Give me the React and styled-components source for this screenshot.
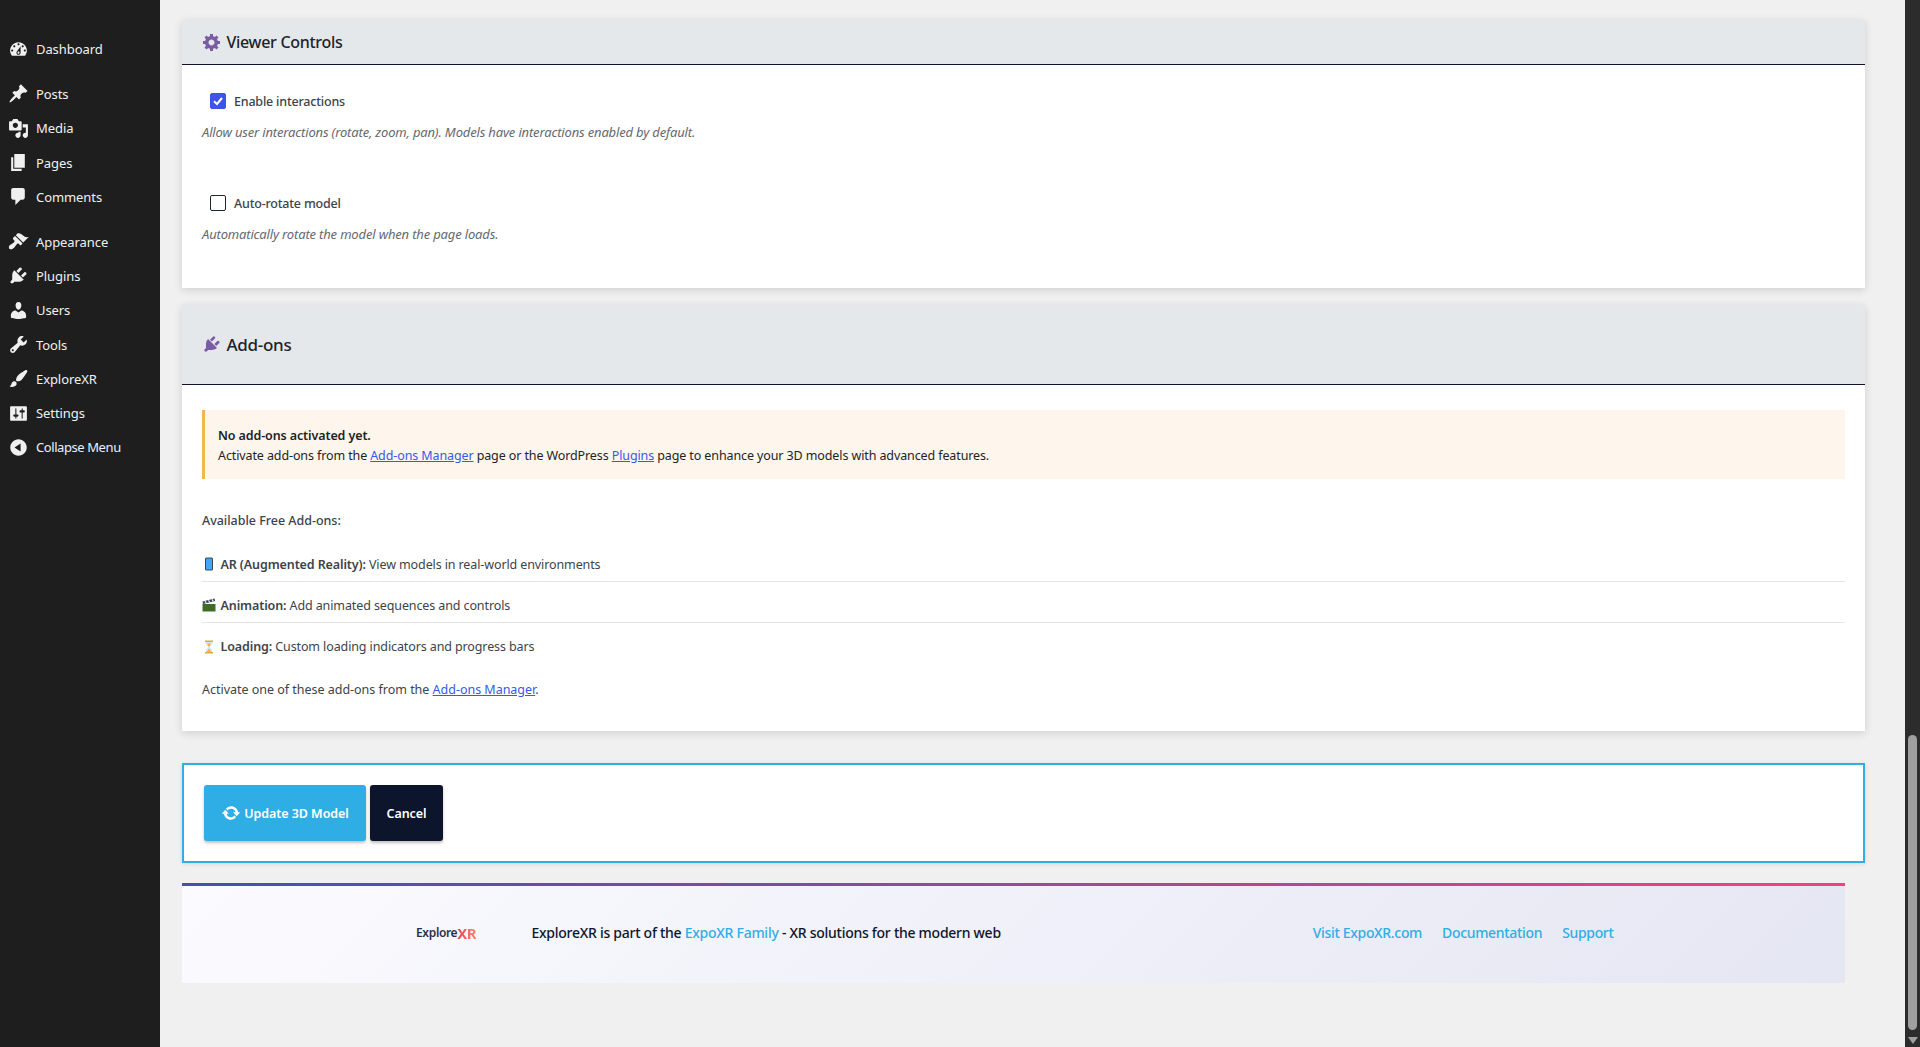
import React from "react";
import styled, { createGlobalStyle } from "styled-components";

const GlobalStyle = createGlobalStyle`
  html, body {
    margin: 0;
    padding: 0;
    height: 100%;
    overflow: hidden;
    background: #f0f0f1;
  }
  body {
    font-family: "Noto Sans", "Open Sans", sans-serif;
    font-size: 12.5px;
    color: #3c434a;
  }
`;

const Page = styled.div`
  display: flex;
  width: 1920px;
  height: 1047px;
  overflow: hidden;
`;

const Sidebar = styled.nav`
  flex: 0 0 160px;
  box-sizing: border-box;
  padding-top: 32px;
  background: #1e1e1e;
`;

const MenuGroup = styled.div`
  margin-bottom: 10.5px;
`;

const MenuItem = styled.a`
  display: flex;
  align-items: center;
  height: 34.3px;
  padding-left: 7.5px;
  gap: 7.5px;
  color: ${(p) => (p.$accent ? "#e6f2ff" : "#f0f0f1")};
  font-size: 13px;
  letter-spacing: ${(p) => (p.$accent ? "-0.42px" : "-0.08px")};
  svg {
    flex: 0 0 21px;
    width: 21px;
    height: 21px;
    fill: #f0f0f1;
  }
`;

const Content = styled.main`
  flex: 1;
  min-width: 0;
  box-sizing: border-box;
  padding: 0 40px 0 22px;
`;

const PreviousCard = styled.div`
  height: 0;
  margin-bottom: 20px;
  box-shadow: 0 1px 2px rgba(0, 0, 0, 0.3);
`;

const Card = styled.section`
  margin-bottom: ${(p) => p.$gap}px;
  background: #fff;
  box-shadow: 0 2px 8px rgba(0, 0, 0, 0.14);
`;

const CardHeader = styled.header`
  display: flex;
  align-items: center;
  box-sizing: border-box;
  height: ${(p) => p.$height}px;
  padding: 0 0 1px 20px;
  gap: 4.5px;
  background: #e4e8eb;
  border-bottom: 1px solid #0d152d;
  color: #1d2327;
  font-size: ${(p) => p.$size}px;
  font-weight: 500;
  letter-spacing: -0.3px;
  svg {
    width: 20px;
    height: 20px;
    fill: #7b5aa6;
  }
`;

const CardBody = styled.div`
  padding: ${(p) => p.$padding};
`;

const CheckRow = styled.label`
  display: flex;
  align-items: center;
  height: 16px;
  margin-left: 8px;
  gap: 8px;
  color: #3c434a;
  font-size: 12.5px;
  font-weight: 500;
  letter-spacing: -0.2px;
`;

const CheckBox = styled.span`
  display: flex;
  align-items: center;
  justify-content: center;
  box-sizing: border-box;
  width: 16px;
  height: 16px;
  border-radius: 2px;
  border: 1px solid ${(p) => (p.$on ? "#3c54e8" : "#1f2533")};
  background: ${(p) => (p.$on ? "#3c54e8" : "#fff")};
  svg {
    width: 12px;
    height: 12px;
  }
`;

const Help = styled.p`
  margin: 15px 0 ${(p) => p.$after}px;
  line-height: 17px;
  color: #646970;
  font-size: 13px;
  font-style: italic;
  letter-spacing: -0.16px;
`;

const Notice = styled.div`
  box-sizing: border-box;
  height: 69px;
  padding: 16px 13px 0;
  background: #fef6ec;
  border-left: 3px solid #f0b849;
  color: #1d2327;
  font-size: 12.5px;
  line-height: 20px;
  letter-spacing: -0.11px;
  strong {
    display: block;
    font-weight: 600;
  }
`;

const TextLink = styled.a`
  color: #3858e9;
  text-decoration: underline;
`;

const Para = styled.p`
  margin: ${(p) => p.$margin};
  line-height: 18px;
  font-size: 12.5px;
  font-weight: ${(p) => (p.$medium ? 500 : 400)};
  letter-spacing: -0.02px;
`;

const AddonList = styled.ul`
  margin: 0;
  padding: 0;
  list-style: none;
`;

const AddonItem = styled.li`
  display: flex;
  align-items: center;
  box-sizing: border-box;
  height: 41px;
  padding-top: 6px;
  gap: 4.5px;
  font-size: 12.5px;
  letter-spacing: -0.11px;
  border-bottom: ${(p) => (p.$last ? "0" : "1px solid #e2e4e7")};
  strong {
    font-weight: 600;
  }
  svg {
    flex: 0 0 14px;
    width: 14px;
    height: 14px;
  }
`;

const ActionBar = styled.div`
  display: flex;
  gap: 4px;
  box-sizing: border-box;
  height: 100px;
  margin: 32px 0 20px;
  padding: 20px;
  background: #fff;
  border: 2px solid #2eaee4;
  box-shadow: 0 1px 4px rgba(0, 0, 0, 0.12);
`;

const Button = styled.button`
  display: flex;
  align-items: center;
  justify-content: center;
  gap: 3px;
  box-sizing: border-box;
  width: ${(p) => p.$width}px;
  height: 56px;
  padding: 0;
  border: 0;
  border-radius: 3px;
  background: ${(p) => p.$bg};
  box-shadow: 0 2px 3px rgba(0, 0, 0, 0.25);
  color: #fff;
  font-family: inherit;
  font-size: 12.5px;
  font-weight: 600;
  letter-spacing: -0.06px;
  svg {
    width: 20px;
    height: 20px;
    fill: #fff;
  }
`;

const Footer = styled.footer`
  display: flex;
  align-items: center;
  box-sizing: border-box;
  height: 100px;
  margin-right: 20px;
  padding: 0 0 4px 234px;
  border-top: 3px solid transparent;
  border-image: linear-gradient(90deg, #3f51b5, #f0437f) 1;
  background: linear-gradient(135deg, #fbfbff, #e4e6f2);
  color: #0d152d;
  font-size: 14px;
  font-weight: 500;
  letter-spacing: -0.27px;
`;

const Logo = styled.span`
  display: flex;
  align-items: center;
  width: 62px;
  margin-right: 53.5px;
  white-space: nowrap;
  color: #2b3045;
  font-size: 12px;
  font-weight: 600;
  letter-spacing: -0.35px;
`;

const LogoMark = styled.b`
  font-size: 15px;
  font-weight: 700;
  letter-spacing: -0.5px;
  background: linear-gradient(90deg, #e8434f, #f8836b);
  -webkit-background-clip: text;
  background-clip: text;
  color: transparent;
`;

const FooterLink = styled.a`
  color: #2eaee4;
`;

const FooterNav = styled.div`
  display: flex;
  gap: 20px;
  margin-left: 312px;
  letter-spacing: -0.33px;
`;

const Scrollbar = styled.aside`
  display: flex;
  flex-direction: column;
  align-items: center;
  flex: 0 0 15px;
  box-sizing: border-box;
  padding-top: 735px;
  background: #2c2c2c;
`;

const ScrollThumb = styled.div`
  width: 9px;
  height: 295px;
  margin-bottom: 7px;
  border-radius: 5px;
  background: #9f9f9f;
`;

const ScrollArrow = styled.div`
  width: 0;
  height: 0;
  border-left: 5px solid transparent;
  border-right: 5px solid transparent;
  border-top: 7px solid #9f9f9f;
`;

const Icon = ({ d }) => (
  <svg viewBox="0 0 20 20">
    <path d={d} />
  </svg>
);

const icons = {
  dashboard:
    "M3.76 16h12.48c1.1-1.37 1.76-3.11 1.76-5 0-4.42-3.58-8-8-8s-8 3.58-8 8c0 1.89.66 3.63 1.76 5zM10 4c.55 0 1 .45 1 1s-.45 1-1 1-1-.45-1-1 .45-1 1-1zM6 6c.55 0 1 .45 1 1s-.45 1-1 1-1-.45-1-1 .45-1 1-1zm8 0c.55 0 1 .45 1 1s-.45 1-1 1-1-.45-1-1 .45-1 1-1zm-5.37 5.55L12 7v6c0 1.1-.9 2-2 2s-2-.9-2-2c0-.57.24-1.08.63-1.45zM4 10c.55 0 1 .45 1 1s-.45 1-1 1-1-.45-1-1 .45-1 1-1zm12 0c.55 0 1 .45 1 1s-.45 1-1 1-1-.45-1-1 .45-1 1-1zm-5 3c0-.55-.45-1-1-1s-1 .45-1 1 .45 1 1 1 1-.45 1-1z",
  posts:
    "M10.44 3.02l1.82-1.82 6.36 6.35-1.83 1.82c-1.05-.68-2.48-.57-3.41.36l-.75.75c-.92.93-1.04 2.35-.35 3.41l-1.83 1.82-2.41-2.41-2.8 2.79c-.42.42-3.38 2.71-3.8 2.29s1.86-3.39 2.28-3.81l2.79-2.79L4.1 9.36l1.83-1.82c1.05.69 2.48.57 3.4-.36l.75-.75c.93-.92 1.05-2.35.36-3.41z",
  media:
    "M13 11V4c0-.55-.45-1-1-1h-1.67L9 1H5L3.67 3H2c-.55 0-1 .45-1 1v7c0 .55.45 1 1 1h10c.55 0 1-.45 1-1zM7 4.5c1.38 0 2.5 1.12 2.5 2.5S8.38 9.5 7 9.5 4.5 8.38 4.5 7 5.62 4.5 7 4.5zM14 6h5v10.5c0 1.38-1.12 2.5-2.5 2.5S14 17.88 14 16.5s1.12-2.5 2.5-2.5c.17 0 .34.02.5.05V9h-3V6zm-4 8.05V13h2v3.5c0 1.38-1.12 2.5-2.5 2.5S7 17.88 7 16.5 8.12 14 9.5 14c.17 0 .34.02.5.05z",
  pages: "M6 15V2h10v13H6zm-1 1h8v2H3V5h2v11z",
  comments:
    "M5 2h9c1.1 0 2 .9 2 2v7c0 1.1-.9 2-2 2h-2l-5 5v-5H5c-1.1 0-2-.9-2-2V4c0-1.1.9-2 2-2z",
  appearance:
    "M14.48 11.06L7.41 3.99l1.5-1.5c.5-.56 2.3-.47 3.51.32 1.21.8 1.43 1.28 2.91 2.1 1.18.64 2.45 1.26 4.45.85zm-.71.71L6.7 4.7 4.93 6.47c-.39.39-.39 1.02 0 1.41l1.06 1.06c.39.39.39 1.03 0 1.42-.6.6-1.43 1.11-2.21 1.69-.35.26-.7.53-1.01.84C1.43 13.23.4 14.89.99 16.5c.11.29.38.56.67.67 1.61.59 3.27-.44 4.61-1.78.31-.31.58-.66.84-1.01.58-.78 1.09-1.61 1.69-2.21.39-.39 1.03-.39 1.42 0l1.06 1.06c.39.39 1.02.39 1.41 0z",
  plugins:
    "M13.11 4.36L9.87 7.6 8 5.73l3.24-3.24c.35-.34 1.05-.2 1.56.32.52.51.66 1.21.31 1.55zm-8 1.77l.91-1.12 9.01 9.01-1.19.84c-.71.71-2.63 1.16-3.82 1.16H6.14L4.9 17.26c-.59.59-1.54.59-2.12 0-.59-.58-.59-1.53 0-2.12l1.24-1.24v-3.88c0-1.13.4-3.19 1.09-3.89zm7.26 3.97l3.24-3.24c.34-.35 1.04-.21 1.55.31.52.51.66 1.21.31 1.55l-3.24 3.25z",
  users:
    "M10 9.25c-2.27 0-2.73-3.44-2.73-3.44C7 4.02 7.82 2 9.97 2c2.16 0 2.98 2.02 2.71 3.81 0 0-.41 3.44-2.68 3.44zm0 2.57L12.72 10c2.39 0 4.52 2.33 4.52 4.53v2.49s-3.65 1.13-7.24 1.13c-3.65 0-7.24-1.13-7.24-1.13v-2.49c0-2.25 1.94-4.48 4.47-4.48z",
  tools:
    "M16.68 9.77c-1.34 1.34-3.3 1.67-4.95.99l-5.41 6.52c-.99.99-2.59.99-3.58 0s-.99-2.59 0-3.57l6.52-5.42c-.68-1.65-.35-3.61.99-4.95 1.28-1.28 3.12-1.62 4.72-1.06l-2.89 2.89 2.82 2.82 2.86-2.87c.53 1.58.18 3.39-1.08 4.65zM3.81 16.21c.4.39 1.04.39 1.43 0 .4-.4.4-1.04 0-1.43-.39-.4-1.03-.4-1.43 0-.39.39-.39 1.03 0 1.43z",
  brush:
    "M18.33 3.57s.27-.8-.31-1.36c-.53-.52-1.22-.24-1.22-.24-.61.3-5.76 3.47-7.67 5.57-.86.96-2.06 3.79-1.09 4.82.92.98 3.96-.17 4.79-1 2.06-2.06 5.21-7.17 5.5-7.79zM1.4 17.65c2.37-1.56 1.46-3.41 3.23-4.64.93-.65 2.22-.62 3.08.29.63.67.8 2.57-.16 3.46-1.57 1.45-4 1.55-6.15.89z",
  settings:
    "M18 16V4c0-.55-.45-1-1-1H3c-.55 0-1 .45-1 1v12c0 .55.45 1 1 1h14c.55 0 1-.45 1-1zM8 11h1c.55 0 1 .45 1 1s-.45 1-1 1H8v1.5c0 .28-.22.5-.5.5s-.5-.22-.5-.5V13H6c-.55 0-1-.45-1-1s.45-1 1-1h1V5.5c0-.28.22-.5.5-.5s.5.22.5.5V11zm5-2h-1c-.55 0-1-.45-1-1s.45-1 1-1h1V5.5c0-.28.22-.5.5-.5s.5.22.5.5V7h1c.55 0 1 .45 1 1s-.45 1-1 1h-1v5.5c0 .28-.22.5-.5.5s-.5-.22-.5-.5V9z",
  collapse:
    "M10 2.16c4.33 0 7.84 3.51 7.84 7.84s-3.51 7.84-7.84 7.84S2.16 14.33 2.16 10 5.71 2.16 10 2.16zm2 11.72V6.12L6.18 9.97z",
  gear:
    "M18 12h-2.18c-.17.7-.44 1.35-.81 1.93l1.54 1.54-2.1 2.1-1.54-1.54c-.58.36-1.23.63-1.91.79V19H8v-2.18c-.68-.16-1.33-.43-1.91-.79l-1.54 1.54-2.12-2.12 1.54-1.54c-.36-.58-.63-1.23-.79-1.91H1V9.03h2.17c.16-.7.44-1.35.8-1.94L2.43 5.55l2.1-2.1 1.54 1.54c.58-.37 1.24-.64 1.93-.81V2h3v2.18c.68.16 1.33.43 1.91.79l1.54-1.54 2.12 2.12-1.54 1.54c.36.59.64 1.24.8 1.94H18V12zm-8.5 1.5c1.66 0 3-1.34 3-3s-1.34-3-3-3-3 1.34-3 3 1.34 3 3 3z",
  update:
    "M10.2 3.28c3.53 0 6.43 2.61 6.91 6h2.08l-3.5 4-3.5-4h2.32c-.45-1.97-2.21-3.44-4.31-3.44-1.45 0-2.73.71-3.54 1.78L4.95 5.66C6.23 4.2 8.11 3.28 10.2 3.28zm-.4 13.44c-3.52 0-6.43-2.61-6.9-6H.81l3.5-4c1.17 1.33 2.33 2.67 3.5 4H5.49c.45 1.97 2.21 3.44 4.31 3.44 1.45 0 2.73-.71 3.54-1.78l1.71 1.95c-1.28 1.46-3.15 2.39-5.25 2.39z",
};

const menuGroups = [
  [["Dashboard", icons.dashboard]],
  [
    ["Posts", icons.posts],
    ["Media", icons.media],
    ["Pages", icons.pages],
    ["Comments", icons.comments],
  ],
  [
    ["Appearance", icons.appearance],
    ["Plugins", icons.plugins],
    ["Users", icons.users],
    ["Tools", icons.tools],
    ["ExploreXR", icons.brush],
    ["Settings", icons.settings],
    ["Collapse Menu", icons.collapse, true],
  ],
];

const PhoneIcon = () => (
  <svg viewBox="0 0 14 14">
    <rect x="3" y="0.5" width="8" height="13" rx="1.5" fill="#37474f" />
    <rect x="4" y="1.5" width="6" height="11" rx="0.5" fill="#42a5f5" />
  </svg>
);

const ClapperIcon = () => (
  <svg viewBox="0 0 14 14">
    <rect x="0.5" y="6" width="13" height="7.5" fill="#3f6b26" />
    <path d="M0.5 3.5 12.5 0.5l.6 2.6L1 6z" fill="#37474f" />
    <path d="M3 3l1.2 2M6.5 2.2l1.2 2M10 1.4l1.2 2" stroke="#eceff1" strokeWidth="1.2" />
  </svg>
);

const HourglassIcon = () => (
  <svg viewBox="0 0 14 14">
    <path d="M3.5 1h7c0 3-1.5 4.5-2.7 6 1.2 1.500 2.700 3 2.700 6h-7c0-3 1.500-4.500 2.700-6C5 5.500 3.500 4 3.500 1z" fill="#cfe8f5" />
    <path d="M4.5 12.5h5L7 8.5zM4.8 3.5h4.4L7 6.800z" fill="#f5b041" />
    <rect x="3" y="0.5" width="8" height="1.5" fill="#e8a33d" />
    <rect x="3" y="12" width="8" height="1.5" fill="#e8a33d" />
  </svg>
);

export default function App() {
  return (
    <Page>
      <GlobalStyle />
      <Sidebar>
        {menuGroups.map((group, i) => (
          <MenuGroup key={i}>
            {group.map(([label, d, accent]) => (
              <MenuItem key={label} $accent={accent}>
                <Icon d={d} />
                {label}
              </MenuItem>
            ))}
          </MenuGroup>
        ))}
      </Sidebar>

      <Content>
        <PreviousCard />

        <Card $gap={17}>
          <CardHeader $height={45} $size={16}>
            <Icon d={icons.gear} />
            Viewer Controls
          </CardHeader>
          <CardBody $padding="28px 20px 45px">
            <CheckRow>
              <CheckBox $on>
                <svg viewBox="0 0 12 12">
                  <path d="M2 6.2 5 9l5-6" fill="none" stroke="#fff" strokeWidth="2" />
                </svg>
              </CheckBox>
              Enable interactions
            </CheckRow>
            <Help $after={54}>
              Allow user interactions (rotate, zoom, pan). Models have interactions enabled by default.
            </Help>
            <CheckRow>
              <CheckBox />
              Auto-rotate model
            </CheckRow>
            <Help $after={0}>Automatically rotate the model when the page loads.</Help>
          </CardBody>
        </Card>

        <Card $gap={32}>
          <CardHeader $height={80} $size={17}>
            <Icon d={icons.plugins} />
            Add-ons
          </CardHeader>
          <CardBody $padding="25px 20px 32px">
            <Notice>
              <strong>No add-ons activated yet.</strong>
              Activate add-ons from the <TextLink>Add-ons Manager</TextLink> page or the WordPress{" "}
              <TextLink>Plugins</TextLink> page to enhance your 3D models with advanced features.
            </Notice>
            <Para $margin="32.5px 0 11.5px" $medium>
              Available Free Add-ons:
            </Para>
            <AddonList>
              <AddonItem>
                <PhoneIcon />
                <span>
                  <strong>AR (Augmented Reality):</strong> View models in real-world environments
                </span>
              </AddonItem>
              <AddonItem>
                <ClapperIcon />
                <span>
                  <strong>Animation:</strong> Add animated sequences and controls
                </span>
              </AddonItem>
              <AddonItem $last>
                <HourglassIcon />
                <span>
                  <strong>Loading:</strong> Custom loading indicators and progress bars
                </span>
              </AddonItem>
            </AddonList>
            <Para $margin="17px 0 0">
              Activate one of these add-ons from the <TextLink>Add-ons Manager</TextLink>.
            </Para>
          </CardBody>
        </Card>

        <ActionBar>
          <Button $width={162} $bg="#2eaee4">
            <Icon d={icons.update} />
            Update 3D Model
          </Button>
          <Button $width={73} $bg="#0d152d">
            Cancel
          </Button>
        </ActionBar>

        <Footer>
          <Logo>
            Explore<LogoMark>XR</LogoMark>
          </Logo>
          <span>
            ExploreXR is part of the <FooterLink>ExpoXR Family</FooterLink> - XR solutions for the modern web
          </span>
          <FooterNav>
            <FooterLink>Visit ExpoXR.com</FooterLink>
            <FooterLink>Documentation</FooterLink>
            <FooterLink>Support</FooterLink>
          </FooterNav>
        </Footer>
      </Content>

      <Scrollbar>
        <ScrollThumb />
        <ScrollArrow />
      </Scrollbar>
    </Page>
  );
}
